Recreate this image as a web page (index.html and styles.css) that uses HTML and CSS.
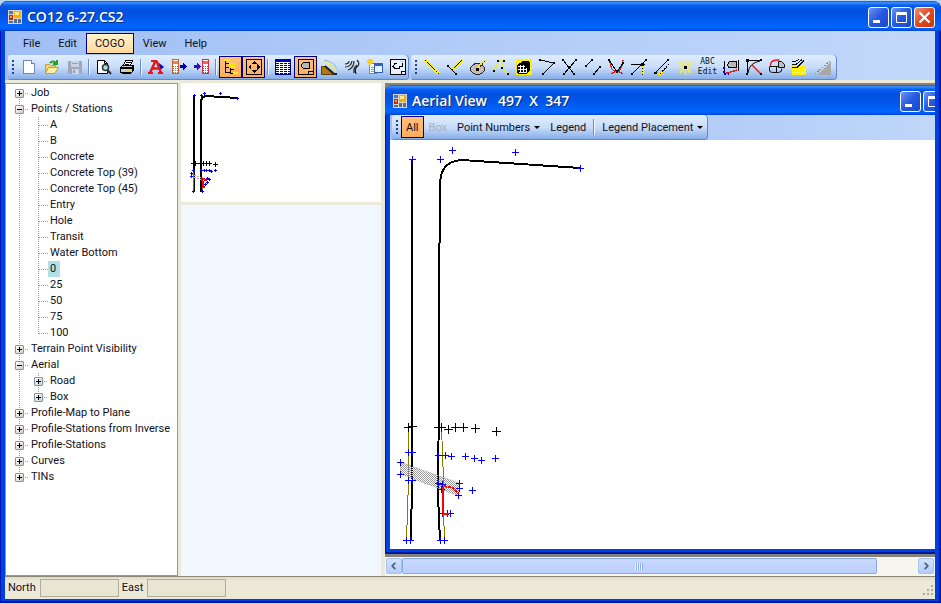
FILE: index.html
```html
<!DOCTYPE html>
<html lang="en">
<head>
<meta charset="utf-8">
<title>CO12 6-27.CS2</title>
<link rel="stylesheet" href="styles.css">
</head>
<body>
<svg class="defs" aria-hidden="true">
  <symbol id="app-icon" viewBox="0 0 14 14">
    <path fill="#d8d4c8" d="M0 0h14v14h-14z"/>
    <path fill="#4a78c8" d="M1 1h4v3h-4z"/>
    <path fill="#c02818" d="M1 5h4v5h-4z"/>
    <path fill="#f09080" d="M2 6h2v2h-2z"/>
    <path fill="#f0b010" d="M6 1h7v7h-7z"/>
    <path fill="#ffe890" d="M7 2h4v3h-4z"/>
    <path fill="#5a6a90" d="M1 11h4v2h-4zM6 9h3v4h-3zM10 9h3v4h-3z"/>
  </symbol>
</svg>
<div class="window">
  <header class="titlebar">
    <svg class="app-icon"><use href="#app-icon"/></svg>
    <h1>CO12 6-27.CS2</h1>
    <div class="caption">
      <button class="cap" aria-label="Minimize"><svg viewBox="0 0 19 19"><path fill="#fff" d="M4 12h7v3h-7z"/></svg></button>
      <button class="cap" aria-label="Maximize"><svg viewBox="0 0 19 19"><path fill="none" stroke="#fff" d="M4.500 4.500h10v10h-10zM4 5.500h11M4 6.500h11"/></svg></button>
      <button class="cap close" aria-label="Close"><svg viewBox="0 0 19 19"><path stroke="#fff" stroke-width="2.200" d="M4.500 4.500l10 10M14.500 4.500l-10 10"/></svg></button>
    </div>
  </header>
  <div class="client">
    <nav class="menubar">
      <button>File</button><button>Edit</button><button class="hot">COGO</button><button>View</button><button>Help</button>
    </nav>
    <div class="toolbars">
      <div class="strip" role="toolbar" aria-label="Standard">
        <i class="grip"></i>
        <button class="tb" aria-label="New"><svg viewBox="0 0 16 16"><path fill="#fff" stroke="#7088b8" d="M2.500 1.500h8l3 3v10h-11z"/><path fill="#c8d8f0" stroke="#7088b8" d="M10.500 1.500v3h3"/></svg></button>
        <button class="tb smooth" aria-label="Open"><svg viewBox="0 0 16 16"><path fill="#f5d860" stroke="#c0a040" d="M1.500 14.500v-9h4l1 1h5v3"/><path fill="#fff0a0" stroke="#c0a040" d="M1.500 14.500l3-6h10l-4 6z"/><path fill="none" stroke="#28a020" stroke-width="2" d="M6 4q3-3 6 0M13 1v4h-4"/></svg></button>
        <button class="tb" aria-label="Save"><svg viewBox="0 0 16 16"><path fill="#a0a8b8" d="M1 2h14v13h-13l-1-1z"/><path fill="#c8d4e8" d="M4 2h8v6h-8zM5 10h7v5h-7z"/><path fill="#98a0b0" d="M6 11h2v3h-2zM5 4h6v1h-6z"/></svg></button>
        <i class="sep"></i>
        <button class="tb smooth" aria-label="Print preview"><svg viewBox="0 0 16 16"><path fill="#fff" stroke="#000" d="M1.500 1.500h7l3 3v10h-10z"/><path fill="none" stroke="#000" d="M8.500 1.500v3h3"/><circle cx="9.500" cy="8.500" r="3" fill="#a8e0e8" stroke="#333" stroke-width="1.500"/><path stroke="#333" stroke-width="2" d="M11.500 11l3.500 4"/></svg></button>
        <button class="tb" aria-label="Print"><svg viewBox="0 0 16 16"><path fill="#fff" stroke="#000" d="M4.500 6.500l2-5h7l-2 5z"/><path stroke="#000" d="M7 3.500h5M6 5.500h4"/><path fill="#ccc" stroke="#000" d="M1.500 8.500l2-2h11v5l-2 2h-11z"/><path stroke="#000" stroke-width="2" d="M1 9h12M3 14h9M14 7v5"/><path stroke="#e8d020" d="M9 11.500h2"/></svg></button>
        <i class="sep"></i>
        <button class="tb smooth" aria-label="Annotate"><svg viewBox="0 0 16 16"><path fill="#0000c0" d="M11 4l5 4l-5 4z"/><path fill="none" stroke="#e01818" stroke-width="2.500" d="M2 14l5-11h2l4 11M4 9.500h8"/><path stroke="#e01818" stroke-width="2" d="M0 14h5M10 14h5M3 2h6"/></svg></button>
        <button class="tb" aria-label="Send to calculator"><svg viewBox="0 0 16 16"><path fill="#fff" stroke="#d06020" d="M1.500.500h6v14h-6z"/><path stroke="#e08850" stroke-width="3" d="M2 3.500h5"/><path stroke="#d06020" stroke-dasharray="1 1" d="M2 7.500h6M2 9.500h6M2 11.500h6M2 13.500h6"/><path fill="#0000b0" d="M9 6h3v-3l4 4.500l-4 4.500v-3h-3z"/></svg></button>
        <button class="tb" aria-label="Read from calculator"><svg viewBox="0 0 16 16"><path fill="#fff" stroke="#d03040" d="M8.500.500h6v14h-6z"/><path stroke="#e86868" stroke-width="3" d="M9 3.500h5"/><path stroke="#d03040" stroke-dasharray="1 1" d="M9 7.500h6M9 9.500h6M9 11.500h6M9 13.500h6"/><path fill="#3010b0" d="M0 6h3v-3l4 4.500l-4 4.500v-3h-3z"/></svg></button>
        <i class="sep"></i>
        <button class="tb on" aria-label="Tree"><svg viewBox="0 0 16 16"><path fill="none" stroke="#000" d="M2.500 1v13M2.500 4.500h4M2.500 8.500h3M2.500 13.500h5M7.500 9v5h3M7.500 10.500h3"/><path stroke="#ffee00" stroke-width="2" d="M1 1h6M6 5h6M7 8h5M10 14h5"/></svg></button>
        <button class="tb on" aria-label="Fit"><svg viewBox="0 0 16 16"><path fill="none" stroke="#000" d="M.5.500h15v15h-15z"/><path d="M8 2l3 3h-6zM8 14l3-3h-6zM2 8l3-3v6zM14 8l-3-3v6z"/></svg></button>
        <i class="sep"></i>
        <button class="tb" aria-label="Table"><svg viewBox="0 0 16 16"><path fill="#fff" stroke="#0000a0" d="M.5.500h15v15h-15z"/><path fill="#0000c0" d="M0 0h16v3h-16z"/><path stroke="#101010" stroke-dasharray="3 1" d="M1 4.500h15M1 6.500h15M1 8.500h15M1 10.500h15M1 12.500h15M1 14.500h15"/></svg></button>
        <button class="tb on" aria-label="Aerial view"><svg viewBox="0 0 16 16"><path fill="none" stroke="#000" d="M.5.500h15v15h-15zM15.500 12.500h-5v3"/><path fill="#b8b8b8" stroke="#000" d="M5.500 3.500h6v6h-6l-2-2v-2z"/></svg></button>
        <button class="tb smooth" aria-label="Profile"><svg viewBox="0 0 16 16"><path fill="#b07810" stroke="#604000" d="M.5 7.500h4l8 8h-12z"/><path fill="none" stroke="#222" stroke-width="2" d="M4 7l9 8h3"/><path fill="none" stroke="#f8e850" stroke-width="1.500" d="M2 4q8-1 13 9"/><path fill="none" stroke="#80b8e0" d="M3 1.500q9 0 13 8"/></svg></button>
        <button class="tb smooth" aria-label="Contours"><svg viewBox="0 0 16 16"><path fill="none" stroke="#222" stroke-width="1.200" d="M1 5q4 0 4-3M1 8q6 0 7-6M4 11q6-2 6-9M13 1q3 3 1 6q-4 2-2 8M10 14v-4q1-3 3-4"/></svg></button>
        <button class="tb" aria-label="New window"><svg viewBox="0 0 16 16"><path fill="#fff" stroke="#888" d="M2.500 4.500h7v10h-7z"/><path stroke="#999" d="M4 8.500h4M4 10.500h4M4 12.500h4"/><path fill="#e8f0ff" stroke="#3060a8" d="M7.500 4.500h8v9h-8z"/><path fill="#3060c0" d="M7 4h9v3h-9z"/><path stroke="#f8d020" stroke-width="1.500" d="M3 0v6M0 3h6M1 1l4 4M5 1l-4 4"/></svg></button>
        <button class="tb" aria-label="Refresh view"><svg viewBox="0 0 16 16"><path fill="#eaf2ff" stroke="#000" d="M.5.500h15v15h-15z"/><path fill="none" stroke="#000" d="M7 4.500h-2l-2 3l2 2h4v-2h3v-4M15 12.500h-4v3"/><path stroke="#e8d858" d="M10 3l4-1"/></svg></button>
      </div>
      <div class="strip" role="toolbar" aria-label="COGO">
        <i class="grip"></i>
        <button class="tb" aria-label="Line"><svg viewBox="0 0 16 16"><path stroke="#fff000" stroke-width="3" d="M1 1l14 14"/><path stroke="#000" stroke-dasharray="2 1" d="M1 1l14 14"/></svg></button>
        <button class="tb" aria-label="Perpendicular"><svg viewBox="0 0 16 16"><path stroke="#fff000" stroke-width="3" d="M5 11l10-10"/><path stroke="#000" stroke-dasharray="2 1" d="M5 11l10-10"/><path stroke="#000" d="M1 7l8 8"/><path d="M0 6h2v2h-2zM8 14h2v2h-2z"/></svg></button>
        <button class="tb" aria-label="Radius"><svg viewBox="0 0 16 16"><ellipse cx="7.500" cy="10" rx="7" ry="5.500" fill="#c8bcb8" stroke="#222"/><path stroke="#fff000" stroke-width="2" d="M8 9l7-8"/><path stroke="#222" stroke-dasharray="2 1" d="M8 10l7-8"/><path d="M6 9h3v3h-3z"/></svg></button>
        <button class="tb" aria-label="Traverse"><svg viewBox="0 0 16 16"><path fill="none" stroke="#f0e820" stroke-width="1.500" d="M1 12l4-10h6l-2 7l6 6"/><path d="M0 11h2v2h-2zM4 1h2v2h-2zM10 1h2v2h-2zM8 8h2v2h-2zM14 14h2v2h-2z"/></svg></button>
        <button class="tb" aria-label="Area grid"><svg viewBox="0 0 16 16"><path fill="#ffee00" d="M0 0h16v16h-16z"/><path d="M1 6l3-2l3-2h6l1 2v7l-3 4h-9l-1-3z"/><path stroke="#fff" d="M2 7.500h7M2 10.500h9M3 13.500h7M4.500 6v8M7.500 6v8M10.500 9v5"/></svg></button>
        <button class="tb" aria-label="Angle"><svg viewBox="0 0 16 16"><path fill="none" stroke="#000" d="M1 1l14 3l-11 11"/><path d="M0 0h2v2h-2zM14 3h2v2h-2zM3 14h2v2h-2z"/></svg></button>
        <button class="tb" aria-label="Intersection"><svg viewBox="0 0 16 16"><path stroke="#000" d="M1 1l11 14M14 1l-12 14"/><path d="M0 0h2v2h-2zM13 0h2v2h-2zM1 14h2v2h-2zM11 14h2v2h-2zM6 7h3v2h-3z"/></svg></button>
        <button class="tb" aria-label="Parallel"><svg viewBox="0 0 16 16"><path stroke="#000" d="M1 7l6-6M9 15l6-7"/><path d="M0 6h2v2h-2zM6 0h2v2h-2zM8 14h2v2h-2zM14 7h2v2h-2z"/></svg></button>
        <button class="tb" aria-label="Arc intersection"><svg viewBox="0 0 16 16"><path fill="none" stroke="#f01818" stroke-width="1.300" d="M2 2q0 10 7 11M15 1q0 8-6 12M3 15q6-5 12 0"/><path fill="none" stroke="#000" d="M1 1l8 12l6-9"/><path d="M0 0h2v2h-2zM14 3h2v2h-2zM8 12h2v2h-2z"/></svg></button>
        <button class="tb" aria-label="Offset"><svg viewBox="0 0 16 16"><path stroke="#fff000" stroke-width="2" d="M12 6v10"/><path stroke="#000" stroke-dasharray="1 2" d="M11.500 6v10"/><path stroke="#000" d="M0 5.500h14M1 15l14-14"/><path d="M0 14h2v2h-2zM14 0h2v2h-2zM10 4h3v3h-3z"/></svg></button>
        <button class="tb" aria-label="Parallel offset"><svg viewBox="0 0 16 16"><path stroke="#fff000" stroke-width="2" d="M5 16l10-11"/><path stroke="#000" stroke-dasharray="2 1" d="M6 15l9-10"/><path stroke="#000" d="M1 14l13-13"/><path d="M0 13h3v2h-3zM13 0h2v2h-2z"/></svg></button>
        <button class="tb smooth" aria-label="Point"><svg viewBox="0 0 16 16"><path stroke="#fff020" stroke-width="1.500" d="M8.500 1v15M0 8.500h16M3 3l11 11M14 3l-11 11"/><path d="M7 7h3v3h-3z"/></svg></button>
        <button class="tb abc"><span>ABC</span><span>Edit</span></button>
        <button class="tb" aria-label="Frame"><svg viewBox="0 0 16 16"><path fill="none" stroke="#000" d="M1.500 2v13M15.500 1v11"/><path fill="#b8b8b8" stroke="#000" d="M6.500 2.500h7v6h-8l-1-3z"/><path stroke="#f01818" stroke-width="1.500" d="M1 15l13-4"/><path stroke="#0000e0" stroke-width="2" stroke-dasharray="2 2" d="M1 8v7M1 15h5"/></svg></button>
        <button class="tb smooth" aria-label="Curve"><svg viewBox="0 0 16 16"><path fill="none" stroke="#000" d="M1.500 15v-13.500h13.500M2 14q1-10 12-12"/><path stroke="#f01818" stroke-width="1.500" d="M6 6l9 9"/><path d="M0 0h3v3h-3zM14 0h2v2h-2zM14 14h2v2h-2zM0 14h2v2h-2z"/></svg></button>
        <button class="tb smooth" aria-label="Circle"><svg viewBox="0 0 16 16"><path fill="none" stroke="#111" d="M.5 7.500h9M7.500 7v6M.5 8v3q0 2.500 3 2.500h6q3.500 0 3.500-4"/><path fill="none" stroke="#f01818" stroke-width="1.300" d="M1.500 7v-2q1-4 7-4h2"/><path fill="#b8c0d0" stroke="#111" d="M9.500 2.500h3l3 3v3h-6z"/></svg></button>
        <button class="tb" aria-label="Surface grid"><svg viewBox="0 0 16 16"><path fill="#fff000" d="M0 7h14v9h-14z"/><path stroke="#fff" stroke-dasharray="1 2" d="M1 10.500h13M1 13.500h13"/><path fill="none" stroke="#111" d="M0 2.500h3l4-2M0 5.500h4l6-5M0 8.500h5l7-7"/></svg></button>
        <button class="tb" aria-label="Slope" disabled><svg viewBox="0 0 16 16"><path fill="#a8a8a8" d="M16 2v14h-14z"/><path stroke="#888" stroke-dasharray="2 1" d="M0 15l15-13"/></svg></button>
      </div>
    </div>
    <main class="workspace">
      <section class="tree-panel">
        <ul class="tree">
          <li><div class="row"><button class="tog" aria-label="Expand"></button><span>Job</span></div></li>
          <li><div class="row"><button class="tog minus" aria-label="Collapse"></button><span>Points / Stations</span></div>
            <ul>
              <li><div class="row leaf"><span>A</span></div></li>
              <li><div class="row leaf"><span>B</span></div></li>
              <li><div class="row leaf"><span>Concrete</span></div></li>
              <li><div class="row leaf"><span>Concrete Top (39)</span></div></li>
              <li><div class="row leaf"><span>Concrete Top (45)</span></div></li>
              <li><div class="row leaf"><span>Entry</span></div></li>
              <li><div class="row leaf"><span>Hole</span></div></li>
              <li><div class="row leaf"><span>Transit</span></div></li>
              <li><div class="row leaf"><span>Water Bottom</span></div></li>
              <li><div class="row leaf selected"><span>0</span></div></li>
              <li><div class="row leaf"><span>25</span></div></li>
              <li><div class="row leaf"><span>50</span></div></li>
              <li><div class="row leaf"><span>75</span></div></li>
              <li><div class="row leaf"><span>100</span></div></li>
            </ul>
          </li>
          <li><div class="row"><button class="tog" aria-label="Expand"></button><span>Terrain Point Visibility</span></div></li>
          <li><div class="row"><button class="tog minus" aria-label="Collapse"></button><span>Aerial</span></div>
            <ul>
              <li><div class="row"><button class="tog" aria-label="Expand"></button><span>Road</span></div></li>
              <li><div class="row"><button class="tog" aria-label="Expand"></button><span>Box</span></div></li>
            </ul>
          </li>
          <li><div class="row"><button class="tog" aria-label="Expand"></button><span>Profile-Map to Plane</span></div></li>
          <li><div class="row"><button class="tog" aria-label="Expand"></button><span>Profile-Stations from Inverse</span></div></li>
          <li><div class="row"><button class="tog" aria-label="Expand"></button><span>Profile-Stations</span></div></li>
          <li><div class="row"><button class="tog" aria-label="Expand"></button><span>Curves</span></div></li>
          <li><div class="row"><button class="tog" aria-label="Expand"></button><span>TINs</span></div></li>
        </ul>
      </section>
      <section class="side">
        <div class="overview">
          <svg viewBox="0 0 200 119">
            <defs>
              <marker id="sb" markerUnits="userSpaceOnUse" markerWidth="3" markerHeight="3" refX="1.500" refY="1.500" viewBox="0 0 3 3"><path stroke="#0000ff" d="M0 1.500h3M1.500 0v3"/></marker>
              <marker id="sk" markerUnits="userSpaceOnUse" markerWidth="5" markerHeight="5" refX="2.500" refY="2.500" viewBox="0 0 5 5"><path stroke="#000" d="M0 2.500h5M2.500 0v5"/></marker>
            </defs>
            <path fill="none" stroke="#000" stroke-width="2" d="M13 12v97M20 109v-90q0-5 5-6l32 2"/>
            <path fill="none" stroke="#808000" d="M12.500 86v22M21.500 98v10"/>
            <path fill="none" stroke="#aaa" stroke-dasharray="2 1" d="M10 91l12 4M10 93l12 4"/>
            <g transform="translate(.5 .5)">
              <polyline fill="none" marker-start="url(#sk)" marker-mid="url(#sk)" marker-end="url(#sk)" points="12,80 14,80 19,80 22,80 25,80 28,80 34,81"/>
              <polyline fill="none" marker-start="url(#sb)" marker-mid="url(#sb)" marker-end="url(#sb)" points="13,12 20,12 23,10 39,10 56,15 12,87 20,87 23,87 25,87 28,87 30,88 34,87 10,90 10,93 26,95 28,96 26,99 24,101 12,108 21,108"/>
            </g>
            <path fill="none" stroke="#f00" stroke-width="2" d="M26 97l-5-1l1 4v4h2"/>
          </svg>
        </div>
        <div class="blank"></div>
      </section>
      <section class="mdi">
        <div class="child">
          <header class="titlebar">
            <svg class="app-icon"><use href="#app-icon"/></svg>
            <h2>Aerial View&nbsp;&nbsp; 497&nbsp; X&nbsp; 347</h2>
            <div class="caption">
              <button class="cap" aria-label="Minimize"><svg viewBox="0 0 19 19"><path fill="#fff" d="M4 12h7v3h-7z"/></svg></button>
              <button class="cap" aria-label="Maximize"><svg viewBox="0 0 19 19"><path fill="none" stroke="#fff" d="M4.500 4.500h10v10h-10zM4 5.500h11M4 6.500h11"/></svg></button>
              <button class="cap close" aria-label="Close"><svg viewBox="0 0 19 19"><path stroke="#fff" stroke-width="2.200" d="M4.500 4.500l10 10M14.500 4.500l-10 10"/></svg></button>
            </div>
          </header>
          <div class="child-client">
            <div class="child-bar">
              <div class="strip" role="toolbar" aria-label="Aerial">
                <i class="grip"></i>
                <button class="tx on">All</button>
                <button class="tx" disabled>Box</button>
                <button class="tx">Point Numbers<i class="arrow"></i></button>
                <button class="tx">Legend</button>
                <i class="sep"></i>
                <button class="tx">Legend Placement<i class="arrow"></i></button>
              </div>
            </div>
            <div class="canvas">
              <svg viewBox="390 140 545 409">
                <defs>
                  <pattern id="hatch" width="2" height="2" patternUnits="userSpaceOnUse"><path fill="#999" d="M0 0h1v1h-1zM1 1h1v1h-1z"/></pattern>
                  <marker id="mb" markerUnits="userSpaceOnUse" markerWidth="7" markerHeight="7" refX="3.500" refY="3.500" viewBox="0 0 7 7"><path stroke="#0000ff" d="M0 3.500h7M3.500 0v7"/></marker>
                  <marker id="mk" markerUnits="userSpaceOnUse" markerWidth="9" markerHeight="9" refX="4.500" refY="4.500" viewBox="0 0 9 9"><path stroke="#000" d="M0 4.500h9M4.500 0v9"/></marker>
                </defs>
                <path fill="none" stroke="#000" stroke-width="2" d="M412 159v308M412 480l-1 61M440 541l-2-46v-40l1-28v-120l1-125q1-14 10-19q6-3 12-3l118 8"/>
                <path fill="none" stroke="#808000" d="M408.500 428v52l-2 61M441.500 427l2 53v30l1 31"/>
                <path fill="url(#hatch)" stroke="#aaa" stroke-width=".5" d="M400 462l59 21v13l-59-22z"/>
                <path fill="none" stroke="#000" stroke-width="2" stroke-dasharray="1 1" d="M412 466v14M438 476v11"/>
                <polyline fill="none" marker-start="url(#mk)" marker-mid="url(#mk)" marker-end="url(#mk)" points="408.500,427.500 412.500,426.500 438.500,427.500 441.500,427.500 448.500,429.500 455.500,427.500 463.500,427.500 475.500,428.500 496.500,431.500"/>
                <polyline fill="none" marker-start="url(#mb)" marker-mid="url(#mb)" marker-end="url(#mb)" points="412.500,159.500 440.500,159.500 452.500,150.500 515.500,152.500 580.500,168.500 408.500,452.500 412.500,452.500 438.500,455.500 445.500,455.500 451.500,456.500 465.500,456.500 474.500,458.500 481.500,460.500 495.500,458.500 400.500,462.500 400.500,474.500 408.500,480.500 412.500,480.500 438.500,483.500 442.500,484.500 441.500,489.500 459.500,483.500 459.500,488.500 458.500,495.500 472.500,490.500 442.500,513.500 447.500,513.500 450.500,513.500 406.500,540.500 410.500,540.500 440.500,540.500 444.500,540.500"/>
                <path fill="none" stroke="#f00" stroke-width="2" d="M443 487v27h6"/>
                <path fill="none" stroke="#f00" stroke-width="2" stroke-dasharray="3 1" d="M444 486l9 2l6 6"/>
              </svg>
            </div>
          </div>
        </div>
        <div class="hscroll">
          <button aria-label="Scroll left"><svg viewBox="0 0 16 16"><path fill="none" stroke="#4d6185" stroke-width="2" d="M9.500 4.500l-3.500 3.500l3.500 3.500"/></svg></button>
          <div class="track"><div class="thumb"><i></i></div></div>
          <button aria-label="Scroll right"><svg viewBox="0 0 16 16"><path fill="none" stroke="#4d6185" stroke-width="2" d="M6.500 4.500l3.500 3.500l-3.500 3.500"/></svg></button>
        </div>
      </section>
    </main>
    <footer class="status">
      <label for="north">North</label><input id="north" readonly>
      <label for="east">East</label><input id="east" readonly>
      <svg class="size-grip" viewBox="0 0 12 12"><path fill="#b0ac98" d="M9 0h2v2h-2zM5 4h2v2h-2zM9 4h2v2h-2zM1 8h2v2h-2zM5 8h2v2h-2zM9 8h2v2h-2z"/></svg>
    </footer>
  </div>
</div>
</body>
</html>
```
FILE: styles.css
```css
* { box-sizing: border-box; }
html, body { height: 100%; }
body {
  margin: 0;
  padding: 1px 0;
  background: #bcd4ee;
  font: 11px/16px Roboto, sans-serif;
  color: #101020;
  overflow: hidden;
}
button { font: inherit; color: inherit; margin: 0; padding: 0; border: 0; background: none; }
svg { display: block; }
.defs { position: absolute; width: 0; height: 0; }

.window {
  height: 100%;
  display: flex;
  flex-direction: column;
  padding: 0 6px 4px 5px;
  background: #0040e0;
  border-radius: 8px 8px 0 0;
  box-shadow: inset 1px 0 #0018b0, inset -2px -2px #0018a0;
  overflow: hidden;
}
.titlebar {
  flex: none;
  height: 30px;
  margin: 0 -6px 0 -5px;
  padding: 2px 6px 0 8px;
  display: flex;
  align-items: center;
  background: linear-gradient(#0a5ae0 0, #3c90ff 6%, #0860f0 14%, #0050e0 30%, #0055e8 55%, #0066ff 85%, #0060f8 93%, #0040d0 100%);
  border-radius: 8px 8px 0 0;
  color: #fff;
}
.app-icon { width: 14px; height: 14px; }
.titlebar h1, .titlebar h2 {
  flex: 1;
  margin: 0 0 0 5px;
  font: 600 14px/20px "Open Sans", sans-serif;
  text-shadow: 1px 1px #0a2a80;
  white-space: nowrap;
}
.caption { display: flex; gap: 2px; }
.cap {
  width: 21px;
  height: 21px;
  border: 1px solid #fff;
  border-radius: 3px;
  background: linear-gradient(135deg, #6a94f4, #2458e0 50%, #1c48d0);
}
.cap svg { width: 19px; height: 19px; }
.cap.close { background: linear-gradient(135deg, #f09078, #e04820 50%, #c83810); }

.client { flex: 1; min-height: 0; display: flex; flex-direction: column; background: #ece9d8; }
.menubar {
  height: 24px;
  padding: 2px 0 1px 9px;
  display: flex;
  background: linear-gradient(90deg, #a0bff5, #c2d8fa);
}
.menubar button { padding: 0 8px; border: 1px solid transparent; }
.menubar button.hot { border-color: #000080; background: linear-gradient(#fff4d0, #ffd898); }
.toolbars {
  height: 25px;
  padding-left: 3px;
  display: flex;
  gap: 2px;
  background: linear-gradient(90deg, #a0bff5, #c2d8fa);
}
.strip {
  display: flex;
  align-items: center;
  height: 25px;
  padding-bottom: 1px;
  border-radius: 2px 4px 4px 2px;
  background: linear-gradient(#e0edfe, #c8dcf9 50%, #86aeea 96%, #3b619c);
  box-shadow: inset -1px 0 #6088c8;
}
.toolbars .strip:last-child { padding-right: 3px; }
.grip {
  flex: none;
  width: 2px;
  height: 15px;
  margin: 0 3px 0 4px;
  background: repeating-linear-gradient(#27418e 0 2px, transparent 2px 4px);
}
.tb {
  flex: none;
  width: 23px;
  height: 22px;
  display: flex;
  align-items: center;
  justify-content: center;
  border: 1px solid transparent;
}
.tb svg { flex: none; width: 16px; height: 16px; shape-rendering: crispEdges; }
.tb.smooth svg { shape-rendering: auto; }
.on { border: 1px solid #000080; background: linear-gradient(#ffc080, #ffad58); }
.tb.abc { flex-direction: column; font: 8px/10px "DejaVu Sans Mono", monospace; }
.sep { flex: none; width: 2px; height: 16px; margin: 0 2px; background: linear-gradient(90deg, #6a8ccb 50%, #f0f6ff 50%); }

.workspace { flex: 1; min-height: 0; display: flex; padding-top: 3px; border-bottom: 1px solid #8a8878; }
.tree-panel {
  flex: none;
  width: 173px;
  border: 1px solid #7f9db9;
  background: #fff;
}
.tree, .tree ul { list-style: none; margin: 0; padding: 0; }
.tree { padding: 1px 0 0 9px; }
.tree ul { padding-left: 19px; }
.tree li { position: relative; }
.tree li::before {
  content: "";
  position: absolute;
  left: 4px;
  top: 0;
  bottom: 0;
  width: 1px;
  background: repeating-linear-gradient(#999 0 1px, transparent 1px 2px);
}
.tree li:last-child::before { bottom: auto; height: 9px; }
.tree > li:first-child::before { top: 8px; }
.row { display: flex; align-items: center; height: 16px; white-space: nowrap; }
.row::before {
  content: "";
  order: 1;
  flex: none;
  width: 5px;
  height: 1px;
  background: repeating-linear-gradient(90deg, transparent 0 1px, #999 1px 2px);
}
.row span { order: 2; padding: 0 2px; }
.row.leaf::before { width: 10px; margin-left: 4px; }
.row.selected span { padding-right: 4px; background: #b0e0e6; }
.tog {
  position: relative;
  flex: none;
  width: 9px;
  height: 9px;
  border: 1px solid #7898b5;
  border-radius: 1px;
  background: linear-gradient(#000, #000) 1px 3px / 5px 1px no-repeat, linear-gradient(#000, #000) 3px 1px / 1px 5px no-repeat, linear-gradient(135deg, #fff, #d0ccc0);
}
.tog.minus { background: linear-gradient(#000, #000) 1px 3px / 5px 1px no-repeat, linear-gradient(135deg, #fff, #d0ccc0); }

.side { flex: none; width: 200px; margin: 0 4px 0 3px; display: flex; flex-direction: column; gap: 3px; }
.overview { height: 119px; background: #fff; }
.overview svg { width: 200px; height: 119px; shape-rendering: crispEdges; }
.blank { flex: 1; background: #f0f7ff; }

.mdi {
  flex: 1;
  min-width: 0;
  display: flex;
  flex-direction: column;
  overflow: hidden;
  background: #85827c;
  padding-top: 2px;
}
.child {
  flex: 1;
  min-height: 0;
  width: calc(100% + 37px);
  display: flex;
  flex-direction: column;
  padding: 0 5px 5px;
  background: #0040e0;
  border-radius: 8px 8px 0 0;
  box-shadow: inset 1px -2px #0018a0;
}
.child-client { flex: 1; min-height: 0; display: flex; flex-direction: column; background: #fff; }
.child-bar { display: flex; padding-left: 2px; background: linear-gradient(90deg, #a0bff5, #c2d8fa); }
.tx { height: 22px; padding: 1px 4px 0; border: 1px solid transparent; white-space: nowrap; }
.tx:disabled { color: #a5afc0; }
.tx.on { border-color: #000080; }
.arrow {
  display: inline-block;
  margin: 0 0 2px 4px;
  border: 3px solid transparent;
  border-top-color: #000;
  border-bottom: 0;
}
.canvas { flex: 1; min-height: 0; overflow: hidden; }
.canvas svg { width: 545px; height: 409px; shape-rendering: crispEdges; }

.hscroll { flex: none; height: 22px; padding: 4px 1px 2px; display: flex; background: linear-gradient(#85827c 3px, #f6f5ee 3px); }
.hscroll button { width: 16px; height: 16px; border: 1px solid #a8c0f0; border-radius: 2px; background: linear-gradient(#d4e2ff, #b4ccfa); }
.hscroll svg { width: 14px; height: 14px; }
.track { flex: 1; }
.thumb {
  width: 92%;
  height: 16px;
  display: flex;
  align-items: center;
  justify-content: center;
  border: 1px solid #88a8e0;
  border-radius: 2px;
  background: linear-gradient(#cad8ff, #bad0fc);
}
.thumb i { width: 8px; height: 7px; background: repeating-linear-gradient(90deg, #eef4ff 0 1px, #8cb0f8 1px 2px); }

.status {
  flex: none;
  height: 22px;
  padding: 2px 1px 2px 3px;
  display: flex;
  align-items: center;
  background: linear-gradient(#dedbca, #ece9d8 20%);
}
.status label { margin-right: 4px; }
.status input { width: 79px; height: 18px; margin-right: 3px; padding: 0; border: 1px solid #b0ad9a; background: #e8e5d2; }
.size-grip { width: 12px; height: 12px; margin: 6px 0 0 auto; }
```
